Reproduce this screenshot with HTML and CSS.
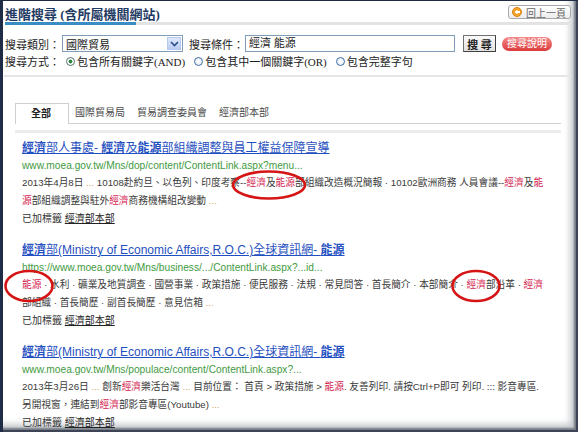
FILE: index.html
```html
<!DOCTYPE html>
<html>
<head>
  <meta charset="utf-8">
  <title>進階搜尋</title>
  <link rel="stylesheet" href="styles.css">
</head>
<body>
  <div class="window">
    <div class="page">
      <div class="head">
        <h1>進階搜尋 (含所屬機關網站)</h1>
        <a class="back" href="#">
          <svg width="11" height="10" viewBox="0 0 11 10">
            <circle cx="5" cy="5" r="4.5" fill="#f3a12a" stroke="#d98310"/>
            <path d="M2.5 5 L5.5 2.5 L5.5 4 L8 4 L8 6 L5.5 6 L5.5 7.5 Z" fill="#fff"/>
          </svg>
          回上一頁
        </a>
      </div>
      <div class="rule"><span></span></div>

      <div class="search">
        <div class="row">
          <span class="label">搜尋類別：</span>
          <div class="select">
            <span>國際貿易</span>
            <span class="arrow">
              <svg width="9" height="6" viewBox="0 0 9 6"><path d="M1 1 L4.5 4.5 L8 1" fill="none" stroke="#2c4f8c" stroke-width="1.6"/></svg>
            </span>
          </div>
          <span class="label second">搜尋條件：</span>
          <div class="input">經濟 能源</div>
          <button class="btn">搜 尋</button>
          <span class="pill">搜尋說明</span>
        </div>
        <div class="row">
          <span class="label">搜尋方式：</span>
          <span class="radio on"></span><span class="opt">包含所有關鍵字(AND)</span>
          <span class="radio"></span><span class="opt">包含其中一個關鍵字(OR)</span>
          <span class="radio"></span><span class="opt">包含完整字句</span>
        </div>
      </div>
      <div class="sep"></div>

      <div class="tabs">
        <span class="tab on">全部</span>
        <span class="tab">國際貿易局</span>
        <span class="tab">貿易調查委員會</span>
        <span class="tab">經濟部本部</span>
      </div>

      <div class="results">
        <div class="result">
          <a class="title" href="#"><b>經濟</b>部人事處- <b>經濟</b>及<b>能源</b>部組織調整與員工權益保障宣導</a>
          <div class="url">www.moea.gov.tw/Mns/dop/content/ContentLink.aspx?menu...</div>
          <div class="snippet">
            2013年4月8日 <span class="dots">...</span> 10108赴約旦、以色列、印度考察--<em>經濟</em>及<em>能源</em>部組織改造概況簡報 · 10102歐洲商務 人員會議--<em>經濟</em>及<em>能</em><br>
            <em>源</em>部組織調整與駐外<em>經濟</em>商務機構組改變動 <span class="dots">...</span>
          </div>
          <div class="tag">已加標籤 <a href="#">經濟部本部</a></div>
        </div>

        <div class="result">
          <a class="title" href="#"><b>經濟</b>部(Ministry of Economic Affairs,R.O.C.)全球資訊網- <b>能源</b></a>
          <div class="url">https://www.moea.gov.tw/Mns/business/.../ContentLink.aspx?...id...</div>
          <div class="snippet">
            <em>能源</em> · 水利 · 礦業及地質調查 · 國營事業 · 政策措施 · 便民服務 · 法規 · 常見問答 · 首長簡介 · 本部簡介 · <em>經濟</em>部沿革 · <em>經濟</em><br>
            部組織 · 首長簡歷 · 副首長簡歷 · 意見信箱 <span class="dots">...</span>
          </div>
          <div class="tag">已加標籤 <a href="#">經濟部本部</a></div>
        </div>

        <div class="result">
          <a class="title" href="#"><b>經濟</b>部(Ministry of Economic Affairs,R.O.C.)全球資訊網- <b>能源</b></a>
          <div class="url">www.moea.gov.tw/Mns/populace/content/ContentLink.aspx?...</div>
          <div class="snippet">
            2013年3月26日 <span class="dots">...</span> 創新<em>經濟</em>樂活台灣 <span class="dots">...</span> 目前位置： 首頁 &gt; 政策措施 &gt; <em>能源</em>. 友善列印. 請按Ctrl+P即可 列印. ::: 影音專區.<br>
            另開視窗，連結到<em>經濟</em>部影音專區(Youtube) <span class="dots">...</span>
          </div>
          <div class="tag">已加標籤 <a href="#">經濟部本部</a></div>
        </div>
      </div>
    </div>

    <!-- hand drawn marks over the results -->
    <svg class="marks" width="575" height="431" viewBox="0 0 575 431">
      <ellipse cx="266" cy="184" rx="36" ry="13.5" fill="none" stroke="#d51515" stroke-width="2.6"/>
      <ellipse cx="26" cy="285" rx="23.5" ry="15" fill="none" stroke="#d51515" stroke-width="2.6"/>
      <ellipse cx="473" cy="285" rx="23.5" ry="15" fill="none" stroke="#d51515" stroke-width="2.6"/>
    </svg>
  </div>
</body>
</html>
```

FILE: styles.css
```css
body {
  margin: 0;
  background-color: #1e2c45;
  overflow: hidden;
  font-family: "Liberation Sans", "Noto Sans CJK TC", sans-serif;
}

.window {
  position: relative;
  margin: 1px 0 0 3px;
  width: 575px;
  height: 431px;
  background-color: #ffffff;
  overflow: hidden;
  box-shadow: inset -2px -2px 0 #3d4455, inset -4px -4px 2px #747a84, inset -9px -9px 6px -1px #c6c9ce;
}

.page {
  padding: 0 7px 0 2px;
}

.head {
  display: flex;
  justify-content: space-between;
  height: 21px;
}

h1 {
  margin: 0;
  padding-top: 6px;
  font-size: 13px;
  line-height: 16px;
  color: #1f3b63;
  font-family: "Liberation Serif", "Noto Sans CJK TC", serif;
}

.back {
  display: flex;
  align-items: center;
  gap: 3px;
  margin-top: 4px;
  height: 12px;
  padding: 0 4px 0 3px;
  border: 1px solid #a8a8a8;
  border-radius: 3px;
  background: linear-gradient(#ffffff, #ececec);
  color: #666666;
  font-size: 10px;
  text-decoration: none;
}

.rule {
  height: 3px;
  background-color: #e3e3e3;
}

.rule span {
  display: block;
  width: 131px;
  height: 3px;
  background-color: #3a8cc4;
}

/* search form */
.search {
  margin-top: 10px;
  font-family: "Liberation Serif", "Noto Sans CJK TC", serif;
  font-size: 11px;
  color: #222222;
}

.row {
  display: flex;
  align-items: center;
}

.row + .row {
  margin-top: 2px;
  height: 14px;
}

.label {
  width: 57px;
}

.label.second {
  margin-left: 6px;
  width: 56px;
}

.select {
  display: flex;
  justify-content: space-between;
  align-items: center;
  box-sizing: border-box;
  width: 121px;
  height: 17px;
  padding-left: 3px;
  border: 1px solid #7f9db9;
  background-color: #ffffff;
}

.select .arrow {
  display: flex;
  align-items: center;
  justify-content: center;
  width: 14px;
  height: 13px;
  margin-right: 1px;
  background: linear-gradient(#dfe9fb, #b9cdf3);
  border: 1px solid #b6c8ec;
  box-sizing: border-box;
}

.input {
  box-sizing: border-box;
  width: 210px;
  height: 17px;
  padding-left: 3px;
  line-height: 15px;
  border: 1px solid #7f9db9;
}

.btn {
  margin-left: 8px;
  width: 33px;
  height: 17px;
  padding: 0;
  border: 1px solid #707070;
  border-right-color: #404040;
  border-bottom-color: #404040;
  background: linear-gradient(#fafafa, #e2e2e2);
  font-family: inherit;
  font-size: 11px;
  font-weight: bold;
  color: #222222;
}

.pill {
  margin-left: 6px;
  padding: 0 5px;
  height: 14px;
  line-height: 14px;
  border-radius: 7px;
  background: linear-gradient(#f58a8a, #dc3b3b);
  color: #ffffff;
  font-size: 10px;
  font-family: "Liberation Sans", "Noto Sans CJK TC", sans-serif;
}

.radio {
  box-sizing: border-box;
  width: 9px;
  height: 9px;
  margin: 0 2px 0 4px;
  border: 1px solid #3f6ea8;
  border-radius: 50%;
  background: radial-gradient(#ffffff, #dde6f0);
}

.radio.on {
  border-color: #52766a;
  background: radial-gradient(#2f8a48 0 1.8px, #ffffff 2.2px);
}

.opt {
  margin-right: 5px;
}

.sep {
  margin: 7px 0 0 -1px;
  height: 2px;
  background-color: #e6e6e6;
}

/* tabs */
.tabs {
  display: flex;
  align-items: flex-end;
  margin: 26px 10px 0 10px;
  border-bottom: 1px solid #cfcfcf;
  font-size: 10px;
  color: #4a4a4a;
}

.tab {
  padding: 0 6px;
  line-height: 20px;
}

.tab.on {
  padding: 0 17px 0 15px;
  border: 1px solid #cfcfcf;
  border-bottom: none;
  margin-bottom: -1px;
  background-color: #ffffff;
  font-weight: bold;
  color: #222222;
}

/* results */
.results {
  margin: 6px 10px 0 10px;
  padding: 7px 0 0 7px;
  border-top: 3px solid #ececec;
}

.result {
  margin-bottom: 15px;
  white-space: nowrap;
}

.title {
  display: block;
  font-size: 12px;
  line-height: 17px;
  color: #1f4fc0;
}

.url {
  font-size: 10.2px;
  line-height: 17px;
  color: #3f9a3f;
}

.snippet {
  font-size: 9.7px;
  line-height: 18px;
  color: #3a3a3a;
}

.snippet em {
  font-style: normal;
  color: #d4234f;
}

.dots {
  color: #d9a56c;
}

.tag {
  font-size: 10px;
  line-height: 17px;
  color: #333333;
}

.tag a {
  color: #222222;
}

.marks {
  position: absolute;
  top: 0;
  left: 0;
}
```
